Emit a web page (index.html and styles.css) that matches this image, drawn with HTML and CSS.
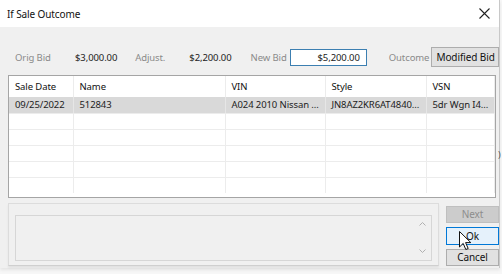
FILE: index.html
```html
<!DOCTYPE html>
<html lang="en">
<head>
  <meta charset="UTF-8" />
  <title>If Sale Outcome</title>
  <link rel="stylesheet" href="styles.css">
</head>
<body>

  <div class="window">
    <div class="titlebar">
      <span class="title">If Sale Outcome</span>
      <svg class="close" width="11" height="11" viewBox="0 0 11 11">
        <path d="M0.5 0.5 L10.5 10.5 M10.5 0.5 L0.5 10.5" stroke="#222" stroke-width="1.1" />
      </svg>
    </div>

    <div class="body">
      <div class="fields">
        <span class="lbl w-orig">Orig Bid</span>
        <span class="val">$3,000.00</span>
        <span class="lbl w-adj">Adjust.</span>
        <span class="val">$2,200.00</span>
        <span class="lbl w-new">New Bid</span>
        <div class="bid-input">$5,200.00</div>
        <span class="lbl w-out">Outcome</span>
        <div class="outcome-btn">Modified Bid</div>
      </div>

      <div class="grid">
        <table class="sales">
          <colgroup>
            <col style="width:64px">
            <col style="width:152px">
            <col style="width:100px">
            <col style="width:101px">
            <col style="width:68px">
            <col>
          </colgroup>
          <tr class="head">
            <td>Sale Date</td><td>Name</td><td>VIN</td><td>Style</td><td>VSN</td><td></td>
          </tr>
          <tr class="selected">
            <td>09/25/2022</td><td>512843</td><td>A024 2010 Nissan ...</td><td>JN8AZ2KR6AT4840...</td><td>5dr Wgn I4...</td><td></td>
          </tr>
          <tr><td></td><td></td><td></td><td></td><td></td><td></td></tr>
          <tr><td></td><td></td><td></td><td></td><td></td><td></td></tr>
          <tr><td></td><td></td><td></td><td></td><td></td><td></td></tr>
          <tr><td></td><td></td><td></td><td></td><td></td><td></td></tr>
          <tr class="last"><td></td><td></td><td></td><td></td><td></td><td></td></tr>
        </table>
      </div>

      <div class="bottom">
        <div class="notes-group">
          <div class="notes">
            <div class="scroll">
              <svg width="7" height="4" viewBox="0 0 7 4">
                <path d="M0.5 3.5 L3.5 0.5 L6.5 3.5" fill="none" stroke="#b0b0b0" stroke-width="1" />
              </svg>
              <svg width="7" height="4" viewBox="0 0 7 4">
                <path d="M0.5 0.5 L3.5 3.5 L6.5 0.5" fill="none" stroke="#b0b0b0" stroke-width="1" />
              </svg>
            </div>
          </div>
        </div>
        <div class="buttons">
          <div class="btn disabled">Next</div>
          <div class="btn default">Ok</div>
          <div class="btn">Cancel</div>
        </div>
      </div>
    </div>
  </div>

  <span class="edge-glyph">)</span>

  <!-- mouse pointer over Ok -->
  <svg class="cursor" width="13" height="20" viewBox="0 0 13 20">
    <path d="M0.5 0.5 L0.5 16 L4.2 12.4 L6.8 18.5 L9.2 17.5 L6.6 11.6 L11.8 11.6 Z" fill="#fff" stroke="#111" stroke-width="1" stroke-linejoin="round" />
  </svg>

</body>
</html>
```

FILE: styles.css
```css
* {
  box-sizing: border-box;
  margin: 0;
  padding: 0;
}

body {
  background-color: #f7f7f7;
  font-family: "Noto Sans", "Open Sans", sans-serif;
  font-size: 9.5px;
  letter-spacing: -0.1px;
  color: #222;
  width: 502px;
  height: 274px;
  overflow: hidden;
  position: relative;
  white-space: nowrap;
}

.window {
  width: 500px;
  height: 268px;
  background-color: #f0f0f0;
  border-right: 1px solid #c8c8c8;
  box-shadow: 0 2px 3px rgba(0,0,0,0.08);
}

.titlebar {
  height: 27px;
  background-color: #fff;
  display: flex;
  align-items: center;
  justify-content: space-between;
  padding: 0 8px 0 7px;
}

.title {
  font-size: 10px;
  color: #111;
}

.close {
  margin-right: 1px;
}

.body {
  padding: 20px 0 0 8px;
}

/* bid fields row */
.fields {
  display: flex;
  align-items: center;
  height: 20px;
  padding-left: 7px;
}

.lbl {
  color: #8a8a8a;
}

.val {
  width: 53px;
  text-align: right;
  color: #222;
}

.w-orig { width: 50px; }
.w-adj { width: 44px; margin-left: 18px; }
.w-new { width: 40px; margin-left: 19px; }
.w-out { width: 43px; margin-left: 22px; }

.bid-input {
  width: 77px;
  height: 17px;
  background-color: #fff;
  border: 1px solid #3c7fb1;
  text-align: right;
  padding-right: 6px;
  line-height: 15px;
}

.outcome-btn {
  width: 68px;
  height: 20px;
  background-color: #e1e1e1;
  border: 1px solid #adadad;
  line-height: 18px;
  padding-left: 4px;
  font-size: 10px;
  color: #111;
  overflow: hidden;
}

/* sales grid */
.grid {
  margin-top: 8px;
  width: 488px;
  height: 123px;
  background-color: #fff;
  border: 1px solid #a5a5a5;
  overflow: hidden;
}

.sales {
  width: 100%;
  border-collapse: collapse;
  table-layout: fixed;
}

.sales td {
  height: 16px;
  padding: 0 0 0 6px;
  border-right: 1px solid #ececec;
  border-bottom: 1px solid #ececec;
  overflow: hidden;
  color: #222;
}

.sales td:last-child {
  border-right: none;
}

.sales .head td {
  height: 21px;
  border-bottom: none;
  color: #111;
}

.sales .selected td {
  background-color: #d9d9d9;
  border-right-color: #e6e6e6;
}

.sales .last td {
  border-bottom: none;
}

/* notes and buttons */
.bottom {
  display: flex;
  margin-top: 5px;
}

.notes-group {
  width: 432px;
  height: 63px;
  border: 1px solid #dcdcdc;
  border-bottom-color: #cfcfcf;
  box-shadow: 0 2px 2px rgba(0,0,0,0.06);
  padding: 11px 6px 4px 6px;
}

.notes {
  height: 46px;
  border: 1px solid #d6d6d6;
  display: flex;
  justify-content: flex-end;
}

.scroll {
  width: 12px;
  display: flex;
  flex-direction: column;
  justify-content: space-between;
  align-items: center;
  padding: 6px 0 7px;
  margin-right: 3px;
}

.buttons {
  margin-left: 7px;
  margin-top: 3px;
  display: flex;
  flex-direction: column;
  gap: 4px;
}

.btn {
  width: 53px;
  height: 17px;
  background-color: #e1e1e1;
  border: 1px solid #adadad;
  text-align: center;
  line-height: 15px;
  font-size: 10px;
  color: #111;
}

.btn.disabled {
  background-color: #cccccc;
  border-color: #bfbfbf;
  color: #8d8d8d;
}

.btn.default {
  height: 18px;
  background-color: #e5f1fb;
  border-color: #0078d7;
  line-height: 16px;
}

.edge-glyph {
  position: absolute;
  left: 498px;
  top: 148px;
  font-size: 9px;
  color: #555;
}

.cursor {
  position: absolute;
  left: 459px;
  top: 231px;
}
```
